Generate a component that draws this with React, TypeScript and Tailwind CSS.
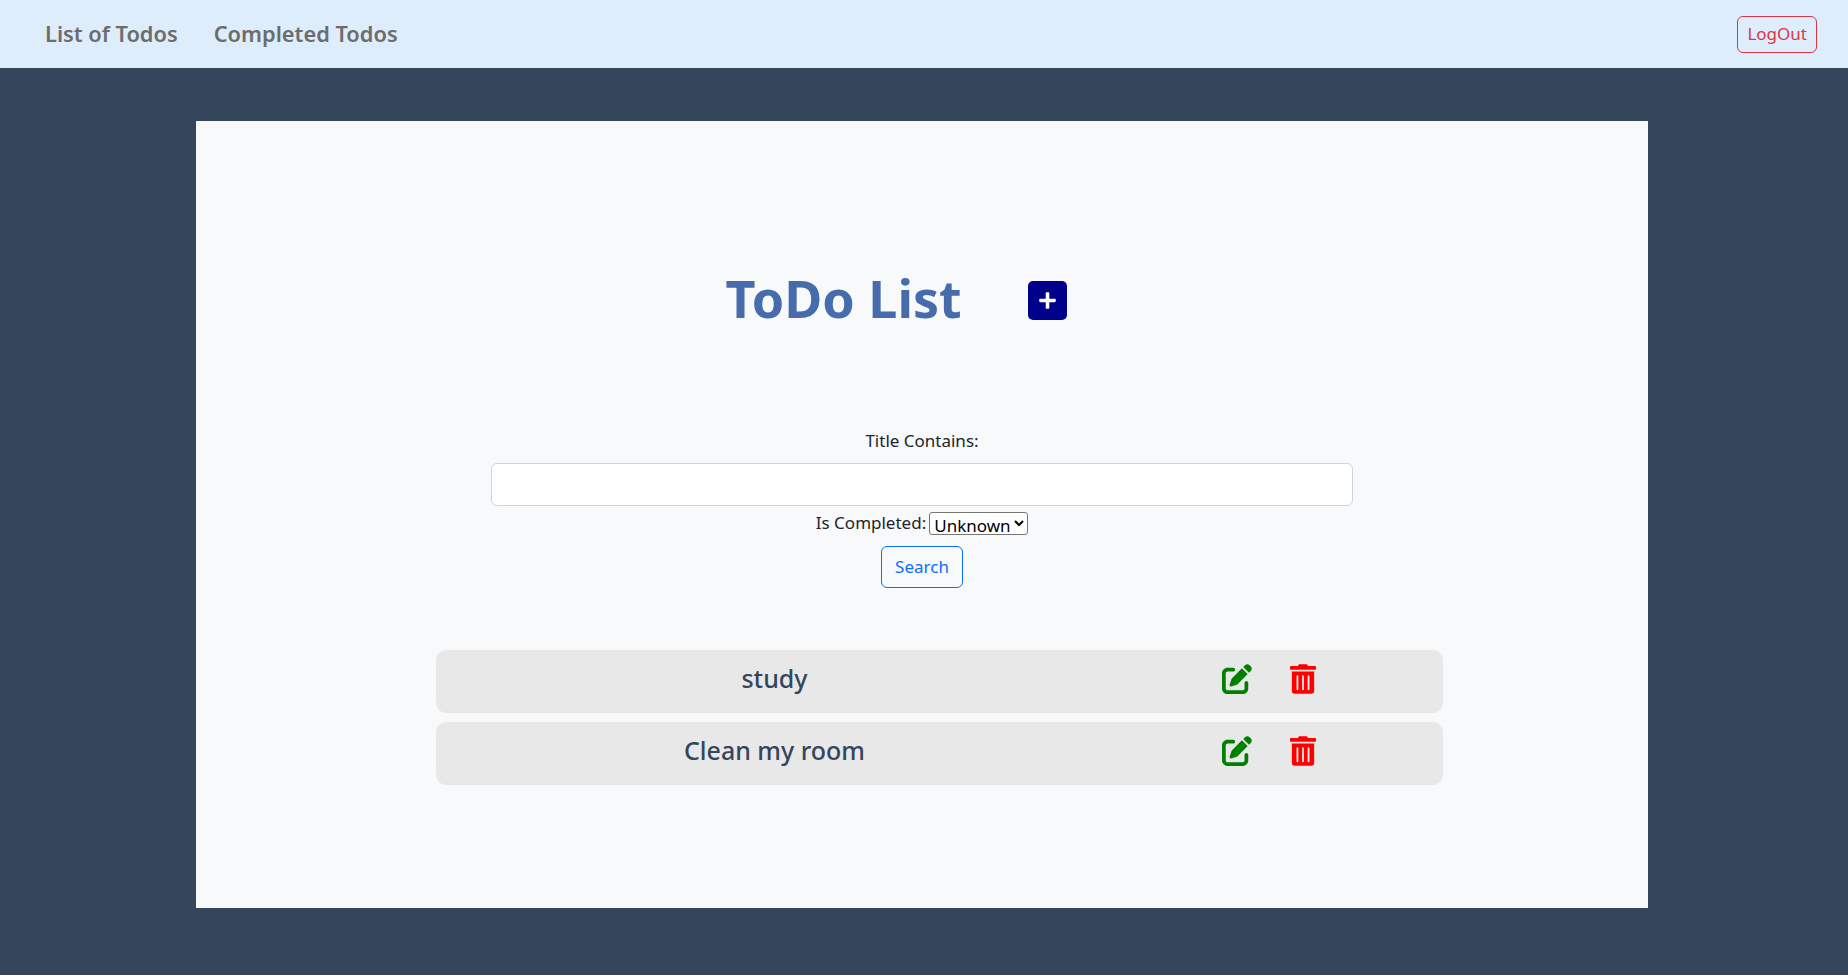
import { FaPlus, FaTrashAlt } from "react-icons/fa";
import { FaPenToSquare } from "react-icons/fa6";

const TODOS = ["study", "Clean my room"];

function TodoRow({ title }: { title: string }) {
  return (
    <div className="flex h-[63px] rounded-[10px] bg-[#e8e8e8] text-[#34465c]">
      <div className="w-[678px] pt-[13px] text-center text-[25px] leading-[30px] font-medium">{title}</div>
      <div className="ml-[108px] flex gap-[38px] pt-[14px]">
        <FaPenToSquare className="h-[30px] w-[30px] text-[#008000]" />
        <FaTrashAlt className="h-[30px] w-[26px] text-[#ff0000]" />
      </div>
    </div>
  );
}

export default function App() {
  return (
    <div className="min-h-[975px] bg-[#34465c] font-['Noto_Sans',sans-serif] text-[#212529]">
      <nav className="flex h-[68px] items-center justify-between bg-[#deedfb] pr-[31px] pl-[45px]">
        <div className="flex gap-[36px] text-[21.8px] font-semibold text-[#6c6c6c]">
          <a>List of Todos</a>
          <a>Completed Todos</a>
        </div>
        <button className="h-[37px] rounded-[6px] border border-[#dc3545] px-[9px] text-[17px] text-[#dc3545]">LogOut</button>
      </nav>

      <main className="mt-[53px] ml-[196px] flex h-[787px] w-[1452px] flex-col items-center bg-[#f8f9fb]">
        <div className="mt-[148px] mr-[52px] flex items-start">
          <h1 className="-mt-[1px] text-[52px] leading-[60px] font-bold text-[#466cab]">ToDo List</h1>
          <button className="mt-[12px] ml-[66px] flex h-[39px] w-[39px] items-center justify-center rounded-[5px] bg-[#00008b] text-white">
            <FaPlus className="h-[19px] w-[19px]" />
          </button>
        </div>

        <form className="mt-[101px] flex w-[862px] flex-col items-center text-[17px]">
          <label className="leading-[24px]">Title Contains:</label>
          <input className="mt-[10px] h-[43px] w-full rounded-[6px] border border-[#ced4da] bg-white" />
          <div className="mt-[4px] flex h-[26px] items-center gap-[3px]">
            <span>Is Completed:</span>
            <select className="h-[23px] rounded-[3px] border border-[#767676] bg-white text-[17px] text-black">
              <option>Unknown</option>
            </select>
          </div>
          <button type="button" className="mt-[10px] h-[42px] rounded-[6px] border border-[#0d6efd] px-[13px] text-[#0d6efd]">Search</button>
        </form>

        <div className="mt-[62px] ml-[34px] flex w-[1007px] flex-col gap-[9px]">
          {TODOS.map((t) => (
            <TodoRow key={t} title={t} />
          ))}
        </div>
      </main>
    </div>
  );
}
